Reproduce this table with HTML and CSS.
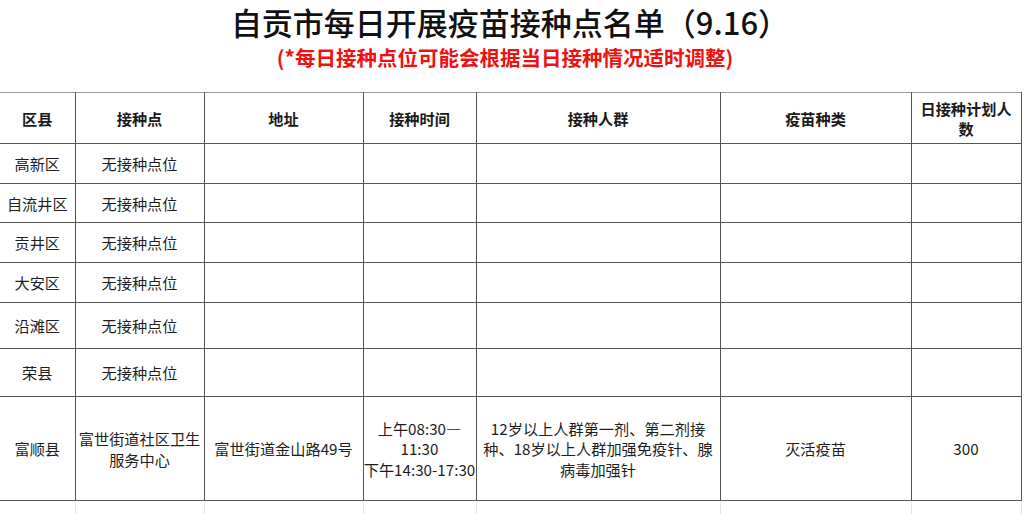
FILE: index.html
```html
<!DOCTYPE html>
<html lang="zh-CN">
<head>
<meta charset="utf-8">
<title>自贡市每日开展疫苗接种点名单</title>
<link rel="stylesheet" href="styles.css">
</head>
<body>
<div class="sheet">
  <header class="heading">
    <h1 class="title">自贡市每日开展疫苗接种点名单（9.16）</h1>
    <p class="note">(*每日接种点位可能会根据当日接种情况适时调整)</p>
  </header>
  <table class="grid">
    <colgroup>
      <col class="c1"><col class="c2"><col class="c3"><col class="c4"><col class="c5"><col class="c6"><col class="c7">
    </colgroup>
    <thead>
      <tr class="h51">
        <th>区县</th><th>接种点</th><th>地址</th><th>接种时间</th><th>接种人群</th><th>疫苗种类</th><th>日接种计划人<br>数</th>
      </tr>
    </thead>
    <tbody>
      <tr class="h40"><td>高新区</td><td>无接种点位</td><td></td><td></td><td></td><td></td><td></td></tr>
      <tr class="h39"><td>自流井区</td><td>无接种点位</td><td></td><td></td><td></td><td></td><td></td></tr>
      <tr class="h40"><td>贡井区</td><td>无接种点位</td><td></td><td></td><td></td><td></td><td></td></tr>
      <tr class="h40"><td>大安区</td><td>无接种点位</td><td></td><td></td><td></td><td></td><td></td></tr>
      <tr class="h46"><td>沿滩区</td><td>无接种点位</td><td></td><td></td><td></td><td></td><td></td></tr>
      <tr class="h48"><td>荣县</td><td>无接种点位</td><td></td><td></td><td></td><td></td><td></td></tr>
      <tr class="h104">
        <td>富顺县</td>
        <td>富世街道社区卫生<br>服务中心</td>
        <td>富世街道金山路49号</td>
        <td>上午08:30—<br>11:30<br>下午14:30-17:30</td>
        <td>12岁以上人群第一剂、第二剂接<br>种、18岁以上人群加强免疫针、腺<br>病毒加强针</td>
        <td>灭活疫苗</td>
        <td>300</td>
      </tr>
      <tr class="blank"><td></td><td></td><td></td><td></td><td></td><td></td><td></td></tr>
    </tbody>
  </table>
</div>
</body>
</html>
```

FILE: styles.css
```css
html, body {
  margin: 0;
  padding: 0;
  background: #ffffff;
}

body {
  font-family: "Noto Sans CJK SC", "Noto Sans", sans-serif;
  color: #1e1e1e;
  overflow: hidden;
}

.sheet {
  width: 1024px;
  height: 514px;
  overflow: hidden;
}

.heading {
  width: 1020px;
  height: 92px;
  box-sizing: border-box;
  padding-top: 2px;
  text-align: center;
}

.title {
  margin: 0;
  font-size: 31px;
  line-height: 40px;
  font-weight: 500;
  color: #111111;
}

.note {
  margin: 0;
  padding-right: 10px;
  font-size: 20.5px;
  line-height: 31px;
  font-weight: 700;
  color: #f01010;
}

.grid {
  border-collapse: collapse;
  table-layout: fixed;
  width: 1021px;
  font-size: 15.2px;
  line-height: 20.5px;
}

.c1 { width: 75px; }
.c2 { width: 129px; }
.c3 { width: 159px; }
.c4 { width: 113px; }
.c5 { width: 244px; }
.c6 { width: 191px; }
.c7 { width: 110px; }

.grid th,
.grid td {
  border: 1px solid #555555;
  padding: 0;
  text-align: center;
  vertical-align: middle;
  overflow: hidden;
  white-space: nowrap;
}

.grid th:first-child,
.grid td:first-child {
  border-left: none;
}

.grid thead th {
  border-top-color: #9a9a9a;
  font-weight: 700;
  color: #1a1a1a;
}

.h51 { height: 51px; }
.h40 { height: 40px; }
.h39 { height: 39px; }
.h46 { height: 46px; }
.h48 { height: 48px; }
.h104 { height: 104px; }

.grid tr.blank td {
  height: 20px;
  border-top-color: #555555;
  border-left-color: #e4e4e4;
  border-right-color: #e4e4e4;
  border-bottom: none;
}
```
